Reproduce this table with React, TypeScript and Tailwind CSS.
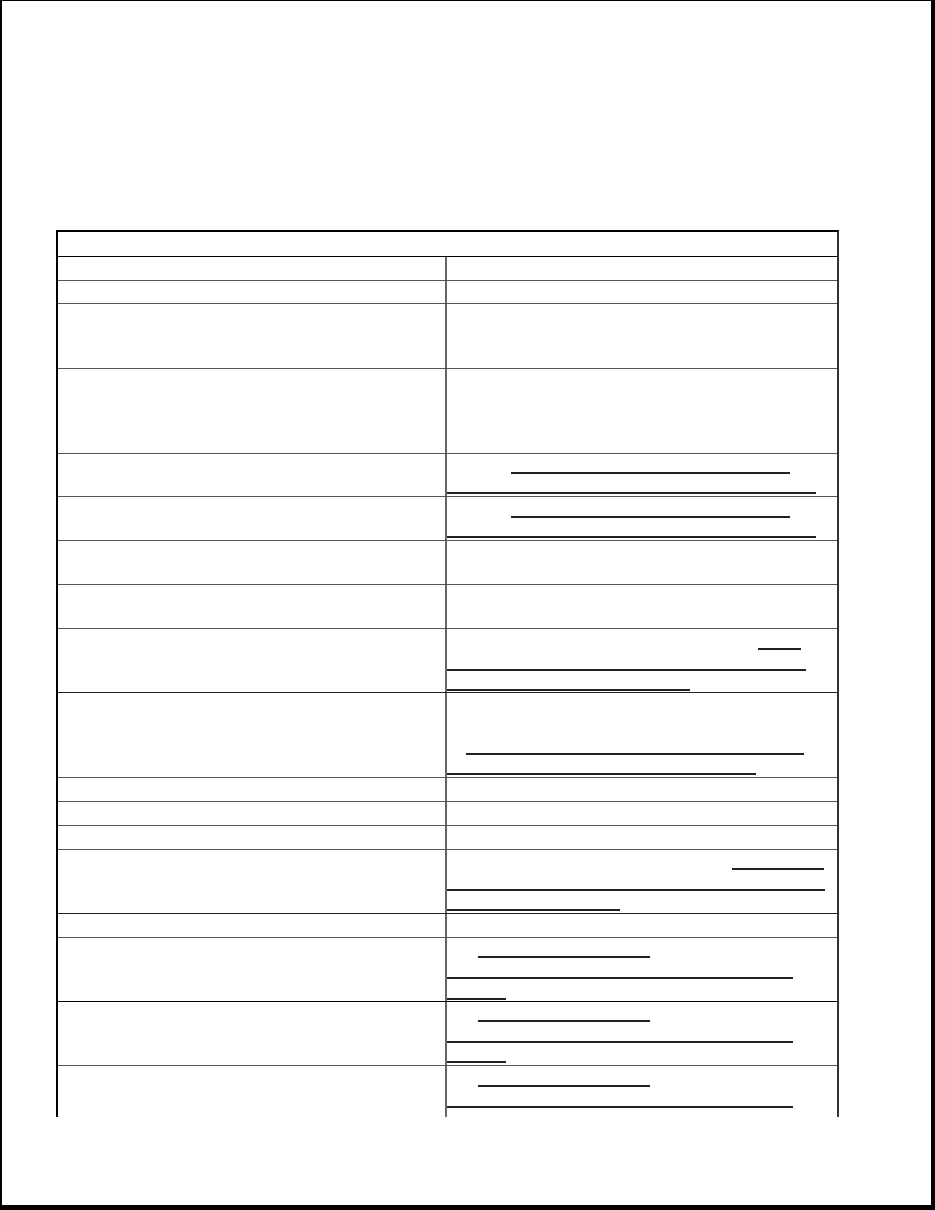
import React from "react";

function L({ className }: { className: string }) {
  return <div className={"h-[2px] bg-[#222] " + className} />;
}

export default function App() {
  const left = "w-[389px] shrink-0 border-r-2 border-[#666]";
  const right = "flex-1 flex flex-col";
  return (
    <div className="w-[935px] h-[1210px] bg-white border-l-2 border-t border-r-4 border-b-[5px] border-black pt-[229px] pl-[54px] font-['Liberation_Sans',sans-serif]">
      <div className="w-[783px] border-t-2 border-l-2 border-black border-r-2 border-r-[#333] flex flex-col">
        {/* title row */}
        <div className="h-[25px] border-b border-black" />
        <div className="h-[24px] border-b border-[#555] flex"><div className={left} /><div className={right} /></div>
        <div className="h-[23px] border-b border-[#555] flex"><div className={left} /><div className={right} /></div>
        <div className="h-[65px] border-b border-[#555] flex"><div className={left} /><div className={right} /></div>
        <div className="h-[85px] border-b border-[#555] flex"><div className={left} /><div className={right} /></div>
        {/* row 6 */}
        <div className="h-[43px] border-b border-[#555] flex">
          <div className={left} />
          <div className={right}>
            <L className="mt-[18px] ml-[64px] w-[279px]" />
            <L className="mt-[18px] w-[369px]" />
          </div>
        </div>
        {/* row 7 */}
        <div className="h-[44px] border-b border-[#555] flex">
          <div className={left} />
          <div className={right}>
            <L className="mt-[19px] ml-[64px] w-[279px]" />
            <L className="mt-[18px] w-[369px]" />
          </div>
        </div>
        <div className="h-[44px] border-b border-[#555] flex"><div className={left} /><div className={right} /></div>
        <div className="h-[44px] border-b border-[#555] flex"><div className={left} /><div className={right} /></div>
        {/* row 10 */}
        <div className="h-[64px] border-b border-[#222] flex">
          <div className={left} />
          <div className={right}>
            <L className="mt-[19px] ml-[311px] w-[43px]" />
            <L className="mt-[19px] w-[359px]" />
            <L className="mt-[18px] w-[243px]" />
          </div>
        </div>
        {/* row 11 */}
        <div className="h-[85px] border-b border-[#555] flex">
          <div className={left} />
          <div className={right}>
            <L className="mt-[60px] ml-[19px] w-[338px]" />
            <L className="mt-[18px] w-[309px]" />
          </div>
        </div>
        <div className="h-[24px] border-b border-[#555] flex"><div className={left} /><div className={right} /></div>
        <div className="h-[24px] border-b border-[#555] flex"><div className={left} /><div className={right} /></div>
        <div className="h-[24px] border-b border-[#555] flex"><div className={left} /><div className={right} /></div>
        {/* row 15 */}
        <div className="h-[64px] border-b border-[#222] flex">
          <div className={left} />
          <div className={right}>
            <L className="mt-[18px] ml-[285px] w-[92px]" />
            <L className="mt-[19px] w-[378px]" />
            <L className="mt-[18px] w-[173px]" />
          </div>
        </div>
        <div className="h-[24px] border-b border-[#555] flex"><div className={left} /><div className={right} /></div>
        {/* row 17 */}
        <div className="h-[64px] border-b border-black flex">
          <div className={left} />
          <div className={right}>
            <L className="mt-[18px] ml-[31px] w-[172px]" />
            <L className="mt-[19px] w-[346px]" />
            <L className="mt-[19px] w-[59px]" />
          </div>
        </div>
        {/* row 18 */}
        <div className="h-[64px] border-b border-[#555] flex">
          <div className={left} />
          <div className={right}>
            <L className="mt-[18px] ml-[31px] w-[172px]" />
            <L className="mt-[19px] w-[346px]" />
            <L className="mt-[18px] w-[59px]" />
          </div>
        </div>
        {/* row 19 (cut off) */}
        <div className="h-[51px] flex">
          <div className={left} />
          <div className={right}>
            <L className="mt-[19px] ml-[31px] w-[172px]" />
            <L className="mt-[19px] w-[346px]" />
          </div>
        </div>
      </div>
    </div>
  );
}
